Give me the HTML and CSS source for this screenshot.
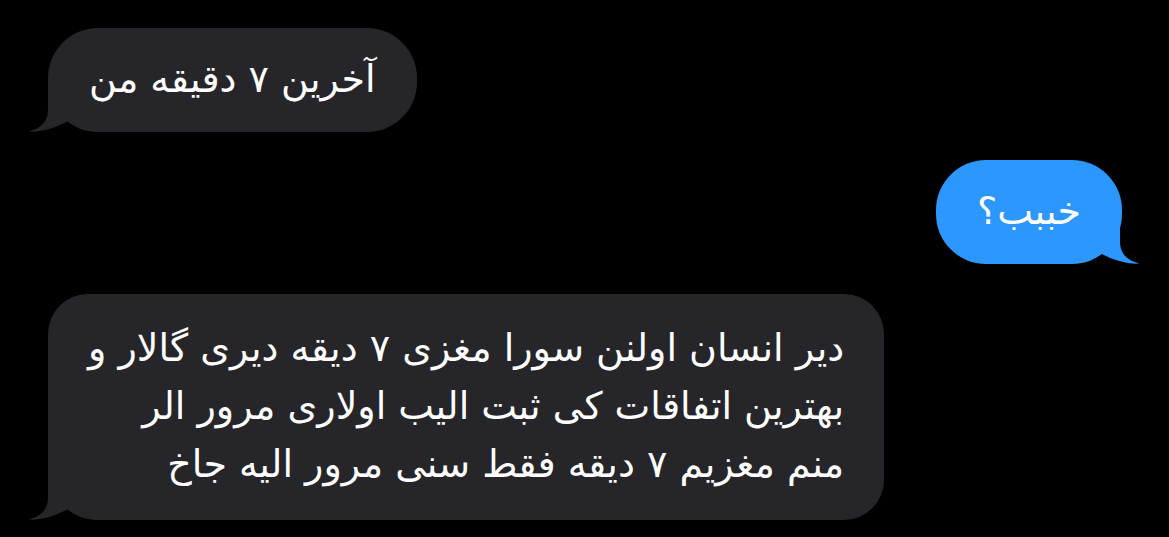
FILE: index.html
```html
<!DOCTYPE html>
<html lang="fa">
  <head>
    <title>پیام‌ها</title>
    <meta charset="UTF-8" />
    <meta name="viewport" content="width=device-width, initial-scale=1" />
    <link rel="stylesheet" href="styles.css">
  </head>
  <body>
    <div class="chat">
      <div class="row in">
        <div class="bubble gray short">
          آخرین ۷ دقیقه من
          <svg class="tail" viewBox="-20 -53 40 53" width="40" height="53">
            <path d="M0,-53 L0,-22 C0,-10 -8,-3 -19.5,-0.5 C-8,0.5 8,-4 20,-11 L20,-53 Z" />
          </svg>
        </div>
      </div>

      <div class="row out">
        <div class="bubble blue short">
          خببب؟
          <svg class="tail" viewBox="-20 -53 40 53" width="40" height="53">
            <path d="M0,-53 L0,-22 C0,-10 -8,-3 -19.5,-0.5 C-8,0.5 8,-4 20,-11 L20,-53 Z" />
          </svg>
        </div>
      </div>

      <div class="row in last">
        <div class="bubble gray">
          دیر انسان اولنن سورا مغزی ۷ دیقه دیری گالار و<br>
          بهترین اتفاقات کی ثبت الیب اولاری مرور الر<br>
          منم مغزیم ۷ دیقه فقط سنی مرور الیه جاخ
          <svg class="tail" viewBox="-20 -53 40 53" width="40" height="53">
            <path d="M0,-53 L0,-22 C0,-10 -8,-3 -19.5,-0.5 C-8,0.5 8,-4 20,-11 L20,-53 Z" />
          </svg>
        </div>
      </div>
    </div>
  </body>
</html>
```

FILE: styles.css
```css
body {
  padding: 0;
  margin: 0;
  background: #000;
  font-family: "DejaVu Sans", "Noto Sans", sans-serif;
}
.chat {
  display: flex;
  flex-direction: column;
  gap: 28px;
  padding: 28px 47px 0 48px;
}
.row {
  display: flex;
}
.row.in {
  justify-content: flex-start;
}
.row.out {
  justify-content: flex-end;
}
.row.last {
  margin-top: 2px;
}
.bubble {
  position: relative;
  direction: rtl;
  color: #fff;
  font-size: 38px;
  line-height: 58px;
  padding: 25px 40px 27px;
  border-radius: 40px;
  white-space: nowrap;
}
.bubble.short {
  padding: 22px 41px 24px;
  border-radius: 50px;
}
.gray {
  background: #262529;
  border-bottom-left-radius: 50px;
}
.blue {
  background: #2c97fe;
}
.tail {
  position: absolute;
  bottom: 0;
  left: -20px;
  display: block;
}
.gray .tail {
  fill: #262529;
}
.blue .tail {
  fill: #2c97fe;
  left: auto;
  right: -18px;
  transform: scaleX(-1);
}
```
